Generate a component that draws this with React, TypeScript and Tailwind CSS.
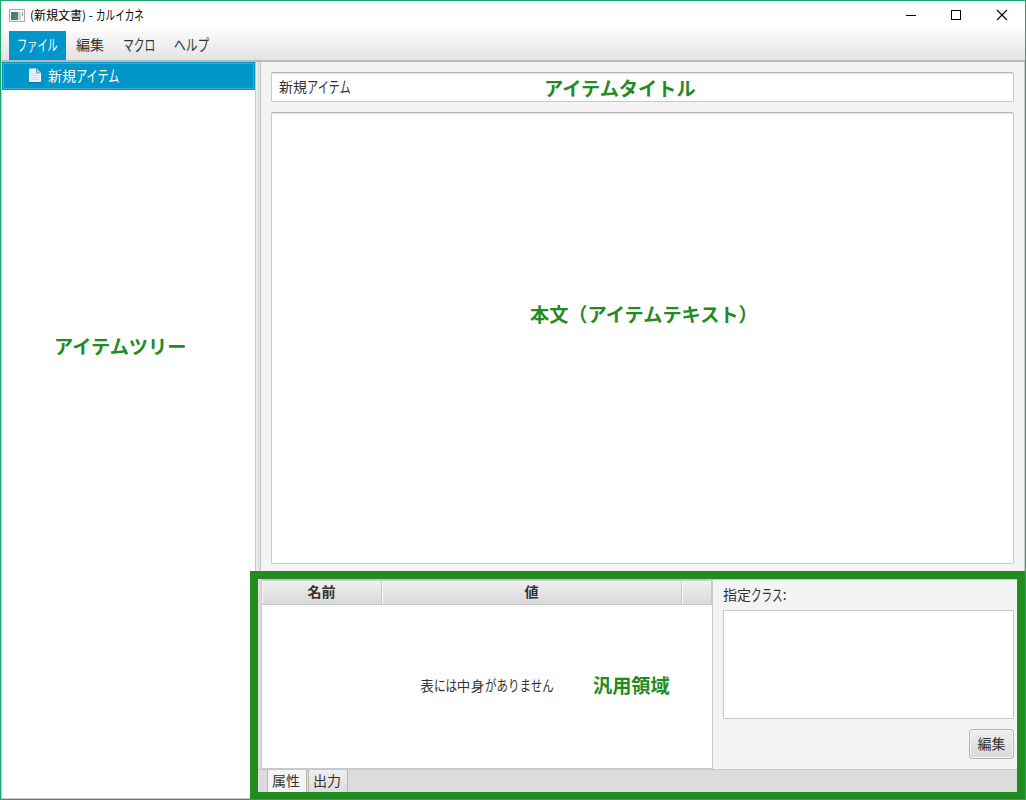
import React from "react";

const jp = "font-['Noto_Sans_CJK_JP',sans-serif]";

// Half-width style kana: slightly enlarged, then squeezed to a fixed advance width.
function Kana({ children, size, adv }: { children: string; size: number; adv: number }) {
  const n = children.length;
  const tall = size * 1.1;
  return (
    <span className="inline-block whitespace-nowrap" style={{ width: n * adv }}>
      <span className="inline-block origin-left" style={{ fontSize: tall, transform: `scaleX(${adv / tall})` }}>
        {children}
      </span>
    </span>
  );
}

function Note({ children, className }: { children: React.ReactNode; className: string }) {
  return (
    <div className={`absolute whitespace-nowrap text-[19.200px] font-bold leading-[28px] text-[#228b22] ${className}`}>
      {children}
    </div>
  );
}

function TitleBar() {
  return (
    <header className="flex h-[30px] shrink-0 items-center bg-white pl-2 text-[12px] text-black">
      <svg className="-mt-px" width="16" height="14" viewBox="0 0 16 14" shapeRendering="crispEdges">
        <rect x=".5" y=".5" width="15" height="12" fill="#f5f5f5" stroke="#a9a9a9" />
        <rect x="2" y="3" width="7" height="8" fill="#3f8c78" />
        <rect x="2" y="3" width="3" height="8" fill="#5a708a" />
        <rect x="9" y="3" width="3" height="8" fill="#d2d2d2" />
        <rect x="13" y="3" width="1" height="4" fill="#9a9a9a" />
      </svg>
      <span className="-mt-[2px] ml-[5px] flex whitespace-pre leading-[18px]">
        (新規文書) - <Kana size={12} adv={9.6}>カルイカネ</Kana>
      </span>
      <svg className="-mt-[2px] ml-auto mr-[16px]" width="104" height="12" viewBox="0 0 104 12" fill="none" stroke="black">
        <path d="M1 6.500h10M46.500 1.500h9v9h-9z" shapeRendering="crispEdges" />
        <path d="m92 1 10 10m0-10-10 10" strokeWidth="1.1" />
      </svg>
    </header>
  );
}

function MenuBar() {
  return (
    <nav className="flex h-[31px] shrink-0 border-b-2 border-[#b9b9b9] bg-linear-to-b from-[#fafafa] to-[#e3e3e3] pl-2 text-[14px] leading-[27px] text-[#333]">
      <div className="w-[57px] bg-[#0096c9] pl-2 text-white"><Kana size={14} adv={10.2}>ファイル</Kana></div>
      <div className="w-[46px] pl-[10px]">編集</div>
      <div className="w-[52px] pl-[11px]"><Kana size={14} adv={10.8}>マクロ</Kana></div>
      <div className="pl-[10px]"><Kana size={14} adv={11.7}>ヘルプ</Kana></div>
    </nav>
  );
}

function ItemTree() {
  return (
    <aside className="w-[255px] shrink-0 border-r border-b border-l border-[#c8c8c8] bg-white">
      <div className="flex h-[28px] items-center border border-[#0096c9] bg-[#0096c9] text-[14px] text-white outline outline-1 -outline-offset-2 outline-[#38acd6]">
        <svg className="-mt-px ml-[25px] mr-[6px]" width="14" height="15" viewBox="0 0 14 15">
          <path d="M1 14.500h12" stroke="#087299" />
          <path d="M1.500 1h7L12.500 5v8.500h-11z" fill="#e8f2f8" stroke="#fff" />
          <path d="M8.500 1v4h4" fill="#b8d4e4" stroke="#6caac6" />
          <path d="M3 5.500h4M3 7.500h8M3 9.500h8M3 11.500h8" stroke="#cfe0ea" />
        </svg>
        <span className="-mt-[2px] flex leading-[20px]">新規<Kana size={14} adv={11.1}>アイテム</Kana></span>
      </div>
    </aside>
  );
}

const field = "rounded-[2px] border border-[#c8c8c8] border-t-[#b5b5b5] bg-white shadow-[inset_0_2px_2px_-1px_#ddd]";
const head = "border-r border-b border-[#c8c8c8] bg-linear-to-b from-[#efefef] to-[#d9d9d9] shadow-[inset_1px_1px_0_#f8f8f8]";

function GenericArea() {
  return (
    <section className="relative z-10 -ml-[11px] flex h-[229px] shrink-0 flex-col border-8 border-[#228b22] bg-[#f4f4f4] text-[14px] text-[#333]">
      <div className="flex min-h-0 flex-1">
        <div className="w-[3px] bg-[#ddd]" />
        <div className="relative flex w-[452px] flex-col border border-t-2 border-[#c8c8c8] bg-white">
          <div className="flex h-[24px] shrink-0 text-center text-[14px] font-bold leading-[21px]">
            <div className={`w-[120px] ${head}`}>名前</div>
            <div className={`w-[300px] ${head}`}>値</div>
            <div className={`flex-1 ${head}`} />
          </div>
          <div className="flex flex-1 items-center justify-center pb-[3px] text-[13.500px]">
            表<Kana size={13.5} adv={11.6}>には</Kana><span className="tracking-[0.500px]">中身</span><Kana size={13.5} adv={11.5}>がありません</Kana>
          </div>
          <Note className="left-[331px] top-[90px]">汎用領域</Note>
        </div>
        <div className="flex flex-1 flex-col border-t border-[#c8c8c8] pl-[10px] pr-[3px]">
          <div className="mt-[3px] flex h-[22px] leading-[22px]">指定<Kana size={14} adv={10.6}>クラス</Kana>:</div>
          <div className="mt-[5px] h-[109px] border border-[#c8c8c8] bg-white" />
          <button className="mt-[10px] h-[30px] w-[45px] self-end rounded-[3px] border border-[#b5b5b5] bg-linear-to-b from-[#efefef] to-[#d9d9d9] pb-[2px] shadow-[inset_0_0_0_1px_#f4f4f4]">編集</button>
        </div>
      </div>
      <div className="flex h-[23px] shrink-0 border-t border-[#c8c8c8] bg-[#dcdcdc] pl-[9px] leading-[20px]">
        <div className="w-[40px] border-x border-[#b5b5b5] bg-[#f4f4f4] pr-[2px] text-center">属性</div>
        <div className="ml-px w-[40px] border-x border-[#b5b5b5] bg-linear-to-b from-[#efefef] to-[#ddd] pr-[2px] text-center">出力</div>
      </div>
    </section>
  );
}

export default function App() {
  return (
    <div className={`relative flex h-[800px] w-[1026px] flex-col overflow-hidden border border-[#1aa968] bg-[#f4f4f4] ${jp}`}>
      <TitleBar />
      <MenuBar />
      <div className="flex min-h-0 flex-1">
        <ItemTree />
        <div className="w-[5px] shrink-0 border-r border-[#c8c8c8] bg-linear-to-r from-[#f0f0f0] to-[#ddd]" />
        <main className="-mb-px flex min-w-0 flex-1 flex-col">
          <div className="flex flex-1 flex-col gap-[10px] border-r border-[#c8c8c8] pt-[10px] pr-[10px] pb-[7px] pl-[10px]">
            <div className={`relative flex h-[30px] pl-[7px] text-[14px] leading-[26px] text-[#333] ${field}`}>
              新規<Kana size={14} adv={11.2}>アイテム</Kana>
              <Note className="left-[272px] top-[1px]">アイテムタイトル</Note>
            </div>
            <div className={`relative flex-1 ${field}`}>
              <Note className="left-[258px] top-[187px]">本文（アイテムテキスト）</Note>
            </div>
          </div>
          <GenericArea />
        </main>
      </div>
      <Note className="left-[53px] top-[331px]">アイテムツリー</Note>
    </div>
  );
}
